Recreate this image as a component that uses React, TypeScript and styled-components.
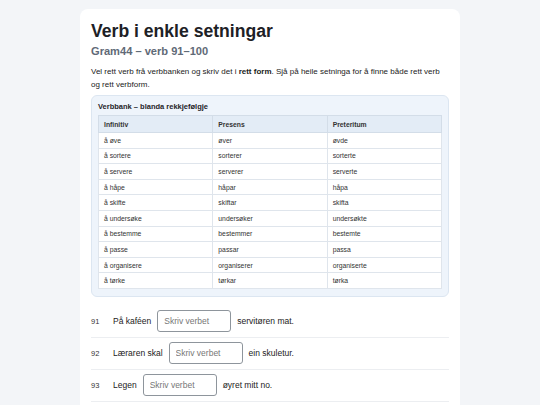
import React from 'react'
import styled, { createGlobalStyle } from 'styled-components'

const GlobalStyle = createGlobalStyle`
    html, body {
        margin: 0;
        padding: 0;
        background: #f3f5f8;
        font-family: "Liberation Sans", Arial, sans-serif;
        color: #1f2328;
    }
`;

const Page = styled.div`
    display: flex;
    justify-content: center;
    padding-top: 9px;
`;

const Card = styled.div`
    width: 358px;
    background: #ffffff;
    border-radius: 8px;
    padding: 10px 11px 20px 11px;
`;

const Title = styled.h1`
    margin: 0;
    font-size: 17.6px;
    font-weight: 700;
    line-height: 24px;
    color: #1d2126;
`;

const Subtitle = styled.h2`
    margin: 1px 0 0 0;
    font-size: 11.1px;
    font-weight: 700;
    line-height: 15px;
    color: #5f6a77;
`;

const Intro = styled.p`
    margin: 6px 0 0 0;
    font-size: 8px;
    line-height: 13px;
    color: #222;

    strong {
        font-weight: 700;
    }
`;

const Bank = styled.div`
    margin-top: 4px;
    background: #eef4fb;
    border: 1px solid #dce6f1;
    border-radius: 6px;
    padding: 5px 6px 7px 6px;
`;

const BankTitle = styled.div`
    font-size: 7.5px;
    font-weight: 700;
    line-height: 11px;
    color: #1f2328;
    margin-bottom: 3px;
`;

const Table = styled.table`
    width: 100%;
    border-collapse: collapse;
    background: #ffffff;
    table-layout: fixed;
`;

const Th = styled.th`
    text-align: left;
    font-size: 6.8px;
    font-weight: 700;
    color: #333;
    background: #e3ecf6;
    border: 1px solid #d3dde8;
    padding: 0 5px;
    height: 16px;
`;

const Td = styled.td`
    font-size: 6.8px;
    color: #333;
    border: 1px solid #dfe5ec;
    padding: 0 5px;
    height: 14.6px;
`;

const Exercises = styled.div`
    margin-top: 9px;
    display: flex;
    flex-direction: column;
`;

const Row = styled.div`
    display: flex;
    align-items: center;
    gap: 5px;
    height: 31px;
    border-bottom: 1px solid #eceef1;
    font-size: 8.5px;
    color: #222;
`;

const Num = styled.span`
    width: 17px;
    font-size: 7.5px;
    color: #333;
`;

const Gap = styled.input`
    width: 74px;
    height: 22px;
    margin: 0 1px;
    box-sizing: border-box;
    border: 1px solid #8e959c;
    border-radius: 3px;
    padding: 0 6px;
    font-family: inherit;
    font-size: 8.5px;
    color: #222;
    background: #fff;
    outline: none;

    &::placeholder {
        color: #777;
    }
`;

const verbs: [string, string, string][] = [
    ['å øve', 'øver', 'øvde'],
    ['å sortere', 'sorterer', 'sorterte'],
    ['å servere', 'serverer', 'serverte'],
    ['å håpe', 'håpar', 'håpa'],
    ['å skifte', 'skiftar', 'skifta'],
    ['å undersøke', 'undersøker', 'undersøkte'],
    ['å bestemme', 'bestemmer', 'bestemte'],
    ['å passe', 'passar', 'passa'],
    ['å organisere', 'organiserer', 'organiserte'],
    ['å tørke', 'tørkar', 'tørka'],
];

const sentences = [
    { n: 91, before: 'På kaféen', after: 'servitøren mat.' },
    { n: 92, before: 'Læraren skal', after: 'ein skuletur.' },
    { n: 93, before: 'Legen', after: 'øyret mitt no.' },
    { n: 94, before: 'Vi må', after: 'golvet etter festen.' },
];

export default function App() {
    return (
        <>
            <GlobalStyle />
            <Page>
                <Card>
                    <Title>Verb i enkle setningar</Title>
                    <Subtitle>Gram44 – verb 91–100</Subtitle>
                    <Intro>
                        Vel rett verb frå verbbanken og skriv det i <strong>rett form</strong>. Sjå på heile setninga for å finne både rett verb og rett verbform.
                    </Intro>
                    <Bank>
                        <BankTitle>Verbbank – blanda rekkjefølgje</BankTitle>
                        <Table>
                            <thead>
                                <tr>
                                    <Th>Infinitiv</Th>
                                    <Th>Presens</Th>
                                    <Th>Preteritum</Th>
                                </tr>
                            </thead>
                            <tbody>
                                {verbs.map(([inf, pres, pret]) => (
                                    <tr key={inf}>
                                        <Td>{inf}</Td>
                                        <Td>{pres}</Td>
                                        <Td>{pret}</Td>
                                    </tr>
                                ))}
                            </tbody>
                        </Table>
                    </Bank>
                    <Exercises>
                        {sentences.map(s => (
                            <Row key={s.n}>
                                <Num>{s.n}</Num>
                                <span>{s.before}</span>
                                <Gap placeholder="Skriv verbet" />
                                <span>{s.after}</span>
                            </Row>
                        ))}
                    </Exercises>
                </Card>
            </Page>
        </>
    )
}
